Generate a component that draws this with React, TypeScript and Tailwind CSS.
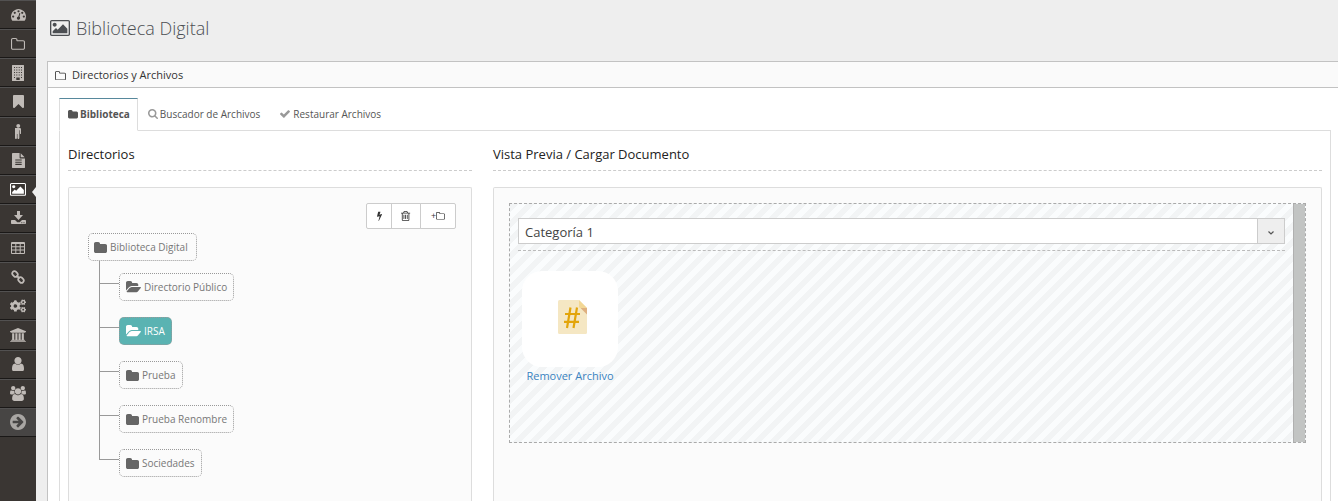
import type { ReactNode } from "react";
import { FaCogs } from "react-icons/fa";

type IconProps = { box?: string; className?: string };

const glyph = (defaultBox: string, children: ReactNode) =>
  function Glyph({ box = defaultBox, className }: IconProps) {
    return (
      <svg viewBox={box} fill="currentColor" aria-hidden="true" className={className}>
        {children}
      </svg>
    );
  };

const Dashboard = glyph(
  "0 128 1792 1536",
  <path
    fillRule="evenodd"
    d="M384 1152q0-53-37.5-90.5t-90.5-37.5-90.5 37.5-37.5 90.5 37.5 90.5 90.5 37.5 90.5-37.5 37.5-90.5zM576 704q0-53-37.5-90.5t-90.5-37.5-90.5 37.5-37.5 90.5 37.5 90.5 90.5 37.5 90.5-37.5 37.5-90.5zM1004 1185l101-382q6-26-7.5-48.5t-38.5-29.5-48 6.5-30 39.5l-101 382q-60 5-107 43.5t-63 98.5q-20 77 20 146t117 89 146-20 89-117q16-60-6-117t-72-91zM1664 1152q0-53-37.5-90.5t-90.5-37.5-90.5 37.5-37.5 90.5 37.5 90.5 90.5 37.5 90.5-37.5 37.5-90.5zM1024 512q0-53-37.5-90.5t-90.5-37.5-90.5 37.5-37.5 90.5 37.5 90.5 90.5 37.5 90.5-37.5 37.5-90.5zM1472 704q0-53-37.5-90.5t-90.5-37.5-90.5 37.5-37.5 90.5 37.5 90.5 90.5 37.5 90.5-37.5 37.5-90.5zM1792 1152q0 261-141 483-19 29-54 29h-1402q-35 0-54-29-141-221-141-483 0-182 71-348t191-286 286-191 348-71 348 71 286 191 191 286 71 348z"
  />
);
const FolderOutline = glyph(
  "64 128 1664 1408",
  <path d="M1600 1312v-704q0-40-28-68t-68-28h-704q-40 0-68-28t-28-68v-64q0-40-28-68t-68-28h-320q-40 0-68 28t-28 68v960q0 40 28 68t68 28h1216q40 0 68-28t28-68zm128-704v704q0 92-66 158t-158 66h-1216q-92 0-158-66t-66-158v-960q0-92 66-158t158-66h320q92 0 158 66t66 158v32h672q92 0 158 66t66 158z" />
);
const Folder = glyph(
  "64 128 1664 1408",
  <path d="M1728 608v704q0 92-66 158t-158 66h-1216q-92 0-158-66t-66-158v-960q0-92 66-158t158-66h320q92 0 158 66t66 158v32h672q92 0 158 66t66 158z" />
);
const FolderOpen = glyph(
  "-64 128 1880 1408",
  <path d="M1815 952q0 31-31 66l-336 396q-43 51-120.5 86.5t-143.5 35.5h-1088q-34 0-60.5-13t-26.5-43q0-31 31-66l336-396q43-51 120.5-86.5t143.5-35.5h1088q34 0 60.5 13t26.5 43zm-343-344v160h-832q-94 0-197 47.5t-164 119.5l-337 396-5 6q0-4-.5-12.5t-.5-12.5v-960q0-92 66-158t158-66h320q92 0 158 66t66 158v32h544q92 0 158 66t66 158z" />
);
const Building = glyph(
  "0 0 12 16",
  <path
    fillRule="evenodd"
    d="M.5 0h11q.5 0 .5.5v15q0 .5-.5.5h-11q-.5 0-.5-.5v-15q0-.5.5-.5zM2 2v1h1v-1zM4.300 2v1h1v-1zM6.700 2v1h1v-1zM9 2v1h1v-1zM2 4.500v1h1v-1zM4.300 4.500v1h1v-1zM6.700 4.500v1h1v-1zM9 4.500v1h1v-1zM2 7v1h1v-1zM4.300 7v1h1v-1zM6.700 7v1h1v-1zM9 7v1h1v-1zM2 9.500v1h1v-1zM4.300 9.500v1h1v-1zM6.700 9.500v1h1v-1zM9 9.500v1h1v-1zM2 12v1h1v-1zM9 12v1h1v-1zM4.300 12.500v2.500h3.400v-2.500z"
  />
);
const Bookmark = glyph(
  "256 128 1280 1536",
  <path d="M1420 128q23 0 44 9 33 13 52.5 41t19.500 62v1289q0 34-19.500 62t-52.500 41q-19 8-44 8-48 0-83-32l-441-424-441 424q-36 33-83 33-23 0-44-9-33-13-52.500-41t-19.500-62v-1289q0-34 19.500-62t52.500-41q21-9 44-9h1048z" />
);
const Male = glyph(
  "512 32 768 1760",
  <path d="M1280 704v416q0 40-28 68t-68 28-68-28-28-68v-352h-64v912q0 46-33 79t-79 33-79-33-33-79v-464h-64v464q0 46-33 79t-79 33-79-33-33-79v-912h-64v352q0 40-28 68t-68 28-68-28-28-68v-416q0-80 56-136t136-56h640q80 0 136 56t56 136zm-160-448q0 93-65.500 158.500t-158.500 65.500-158.500-65.500-65.500-158.500 65.500-158.500 158.500-65.500 158.500 65.500 65.500 158.500z" />
);
const FileText = glyph(
  "128 0 1536 1792",
  <path
    fillRule="evenodd"
    d="M1596 476q14 14 28 36h-472v-472q22 14 36 28zM1120 640h544v1056q0 40-28 68t-68 28h-1344q-40 0-68-28t-28-68v-1600q0-40 28-68t68-28h800v544q0 40 28 68t68 28zM1280 1376v-64q0-14-9-23t-23-9h-704q-14 0-23 9t-9 23v64q0 14 9 23t23 9h704q14 0 23-9t9-23zM1280 1120v-64q0-14-9-23t-23-9h-704q-14 0-23 9t-9 23v64q0 14 9 23t23 9h704q14 0 23-9t9-23zM1280 864v-64q0-14-9-23t-23-9h-704q-14 0-23 9t-9 23v64q0 14 9 23t23 9h704q14 0 23-9t9-23z"
  />
);
const Picture = glyph(
  "-64 128 1920 1536",
  <path d="M576 576q0 80-56 136t-136 56-136-56-56-136 56-136 136-56 136 56 56 136zm1024 384v448h-1408v-192l320-320 160 160 512-512zm96-704h-1600q-13 0-22.500 9.500t-9.500 22.500v1216q0 13 9.500 22.500t22.500 9.500h1600q13 0 22.500-9.500t9.500-22.500v-1216q0-13-9.500-22.500t-22.500-9.500zm160 32v1216q0 66-47 113t-113 47h-1600q-66 0-113-47t-47-113v-1216q0-66 47-113t113-47h1600q66 0 113 47t47 113z" />
);
const Download = glyph(
  "0 0 15 14",
  <path
    fillRule="evenodd"
    d="M6 0h3v4h3l-4.500 5-4.500-5h3zM.8 9h3.200l2.300 2.200h2.400l2.300-2.200h3.200q.8 0 .8.8v2.400q0 .8-.8.8h-13.400q-.8 0-.8-.8v-2.400q0-.8.8-.8zM10.300 11.200v1h1v-1zM12.500 11.200v1h1v-1z"
  />
);
const Table = glyph(
  "0 0 14 12",
  <path
    fillRule="evenodd"
    d="M1 0h12q1 0 1 1v10q0 1-1 1h-12q-1 0-1-1v-10q0-1 1-1zM1 2v2.300h3.300v-2.300zM5.300 2v2.300h3.400v-2.300zM9.700 2v2.300h3.300v-2.300zM1 5.300v2.300h3.300v-2.300zM5.300 5.300v2.300h3.400v-2.300zM9.700 5.300v2.300h3.300v-2.300zM1 8.600v2.400h3.300v-2.400zM5.300 8.600v2.400h3.400v-2.400zM9.700 8.600v2.400h3.300v-2.400z"
  />
);
const Chain = glyph(
  "0 0 14 14",
  <g fill="none" stroke="currentColor" strokeWidth="1.800">
    <rect x="-3" y="-2.200" width="6" height="4.400" rx="2" transform="translate(4 4) rotate(45)" />
    <rect x="-3" y="-2.200" width="6" height="4.400" rx="2" transform="translate(10 10) rotate(45)" />
    <path d="M5.500 5.500l3 3" />
  </g>
);
const Bank = glyph(
  "-64 128 1920 1792",
  <path d="M896 128l960 384v128h-128q0 26-20.500 45t-48.500 19h-1526q-28 0-48.500-19t-20.500-45h-128v-128zm-704 640h256v768h128v-768h256v768h128v-768h256v768h128v-768h256v768h59q28 0 48.500 19t20.500 45v64h-1664v-64q0-26 20.500-45t48.500-19h59v-768zm1595 960q28 0 48.500 19t20.500 45v128h-1920v-128q0-26 20.500-45t48.500-19h1782z" />
);
const User = glyph(
  "256 128 1280 1536",
  <path d="M1536 1399q0 109-62.500 187t-150.500 78h-854q-88 0-150.500-78t-62.500-187q0-85 8.500-160.500t31.500-152 58.500-131 94-89 134.500-34.500q131 128 313 128t313-128q76 0 134.500 34.500t94 89 58.500 131 31.500 152 8.500 160.500zm-256-887q0 159-112.500 271.500t-271.500 112.500-271.500-112.500-112.500-271.500 112.500-271.500 271.500-112.500 271.500 112.500 112.500 271.500z" />
);
const Users = glyph(
  "-64 0 1920 1792",
  <path d="M529 896q-162 5-265 128h-134q-82 0-138-40.500t-56-118.500q0-353 124-353 6 0 43.500 21t97.500 42.500 119 21.500q67 0 133-23-5 37-5 66 0 139 81 256zm1071 637q0 120-73 189.500t-194 69.500h-874q-121 0-194-69.500t-73-189.500q0-53 3.500-103.500t14-109 26.500-108.500 43-97.500 62-81 85.500-53.500 111.500-20q10 0 43 21.500t73 48 107 48 135 21.500 135-21.500 107-48 73-48 43-21.500q61 0 111.500 20t85.500 53.500 62 81 43 97.500 26.500 108.500 14 109 3.500 103.500zm-1024-1277q0 106-75 181t-181 75-181-75-75-181 75-181 181-75 181 75 75 181zm704 384q0 159-112.500 271.500t-271.500 112.500-271.500-112.500-112.500-271.500 112.500-271.500 271.500-112.500 271.500 112.500 112.500 271.500zm576 225q0 78-56 118.500t-138 40.500h-134q-103-123-265-128 81-117 81-256 0-29-5-66 66 23 133 23 59 0 119-21.500t97.500-42.500 43.500-21q124 0 124 353zm-128-609q0 106-75 181t-181 75-181-75-75-181 75-181 181-75 181 75 75 181z" />
);
const ArrowCircle = glyph(
  "128 128 1536 1536",
  <path d="M1413 896q0-27-18-45l-91-91-362-362q-18-18-45-18t-45 18l-91 91q-18 18-18 45t18 45l189 189h-502q-26 0-45 19t-19 45v128q0 26 19 45t45 19h502l-189 189q-19 19-19 45t19 45l91 91q18 18 45 18t45-18l362-362 91-91q18-18 18-45zm251 0q0 209-103 385.500t-279.500 279.500-385.500 103-385.500-103-279.500-279.500-103-385.500 103-385.500 279.500-279.500 385.500-103 385.500 103 279.500 279.500 103 385.500z" />
);
const Search = glyph(
  "64 128 1664 1664",
  <path d="M1216 832q0-185-131.500-316.500t-316.500-131.500-316.500 131.500-131.500 316.500 131.500 316.500 316.500 131.500 316.500-131.500 131.500-316.500zm512 832q0 52-38 90t-90 38q-54 0-90-38l-343-342q-179 124-399 124-143 0-273.500-55.500t-225-150-150-225-55.500-273.500 55.500-273.500 150-225 225-150 273.500-55.500 273.500 55.500 225 150 150 225 55.500 273.500q0 220-124 399l343 343q37 37 37 90z" />
);
const Check = glyph(
  "121 309 1550 1213",
  <path d="M1671 566q0 40-28 68l-724 724-136 136q-28 28-68 28t-68-28l-136-136-362-362q-28-28-28-68t28-68l136-136q28-28 68-28t68 28l294 295 656-657q28-28 68-28t68 28l136 136q28 28 28 68z" />
);
const Bolt = glyph(
  "448 0 896 1792",
  <path d="M1333 566q18 20 7 44l-540 1157q-13 25-42 25-4 0-14-2-17-5-25.500-19t-4.500-30l197-808-406 101q-4 1-12 1-18 0-31-11-18-15-13-39l201-825q4-14 16-23t28-9h328q19 0 32 12.500t13 29.500q0 8-5 18l-171 463 396-98q8-2 12-2 19 0 34 15z" />
);
const Trash = glyph(
  "192 128 1408 1536",
  <path d="M704 736v576q0 14-9 23t-23 9h-64q-14 0-23-9t-9-23v-576q0-14 9-23t23-9h64q14 0 23 9t9 23zm256 0v576q0 14-9 23t-23 9h-64q-14 0-23-9t-9-23v-576q0-14 9-23t23-9h64q14 0 23 9t9 23zm256 0v576q0 14-9 23t-23 9h-64q-14 0-23-9t-9-23v-576q0-14 9-23t23-9h64q14 0 23 9t9 23zm128 724v-948h-896v948q0 22 7 40.500t14.500 27 10.500 8.500h832q3 0 10.500-8.500t14.500-27 7-40.500zm-672-1076h448l-48-117q-7-9-17-11h-317q-10 2-17 11zm928 32v64q0 14-9 23t-23 9h-96v948q0 83-47 143.500t-113 60.500h-832q-66 0-113-58.500t-47-141.500v-952h-96q-14 0-23-9t-9-23v-64q0-14 9-23t23-9h309l70-167q15-37 54-63t79-26h320q40 0 79 26t54 63l70 167h309q14 0 23 9t9 23z" />
);

const navItems: { label: string; icon: ReactNode; state?: "current" | "toggle" }[] = [
  { label: "Tablero", icon: <Dashboard className="w-[15px]" /> },
  { label: "Carpetas", icon: <FolderOutline className="w-[14px]" /> },
  { label: "Empresas", icon: <Building className="w-[12px]" /> },
  { label: "Marcadores", icon: <Bookmark className="w-[11px]" /> },
  { label: "Personas", icon: <Male className="h-[15px]" /> },
  { label: "Documentos", icon: <FileText className="w-[13px]" /> },
  { label: "Biblioteca Digital", icon: <Picture className="w-4" />, state: "current" },
  { label: "Descargas", icon: <Download className="w-[15px]" /> },
  { label: "Tablas", icon: <Table className="w-[14px]" /> },
  { label: "Enlaces", icon: <Chain className="w-[14px]" /> },
  { label: "Procesos", icon: <FaCogs className="size-4" /> },
  { label: "Instituciones", icon: <Bank className="w-4" /> },
  { label: "Usuario", icon: <User className="w-[12px]" /> },
  { label: "Grupos", icon: <Users className="w-4" /> },
  { label: "Expandir", icon: <ArrowCircle className="w-4" />, state: "toggle" },
];

function Sidebar() {
  return (
    <nav aria-label="Principal" className="w-9 shrink-0 bg-[#3a3633]">
      <ul className="grid h-[437px] auto-rows-fr">
        {navItems.map(({ label, icon, state }) => (
          <li key={label} className="relative">
            <a
              href="#"
              aria-label={label}
              className={
                "flex h-full items-center justify-center border-t border-b border-t-[#525151] border-b-[#1a1817] " +
                (state === "current"
                  ? "text-white"
                  : state === "toggle"
                    ? "bg-[#474544] text-[#a9a6a3]"
                    : "text-[#c0bbb7]")
              }
            >
              {icon}
            </a>
            {state === "current" && (
              <svg viewBox="0 0 4 10" aria-hidden="true" className="absolute top-3 right-0 h-[10px] w-1 fill-[#eeeeee]">
                <path d="M4 0L0 5l4 5z" />
              </svg>
            )}
          </li>
        ))}
      </ul>
    </nav>
  );
}

const folders = [
  { name: "Directorio Público", open: true },
  { name: "IRSA", open: true, selected: true },
  { name: "Prueba" },
  { name: "Prueba Renombre" },
  { name: "Sociedades" },
];

type TreeNodeProps = { name: string; open?: boolean; selected?: boolean; root?: boolean };

function TreeNode({ name, open, selected, root }: TreeNodeProps) {
  return (
    <button
      type="button"
      className={
        "flex h-7 items-center gap-[3px] rounded-[5px] border border-dotted border-[#999] text-[10px] " +
        (root ? "pr-2 pl-[5px] " : "px-[6px] ") +
        (selected ? "bg-[#5ab3b2] text-white" : "text-[#777]")
      }
    >
      <span className={selected ? "text-white" : "text-[#666]"}>
        {open ? <FolderOpen className="w-[15px]" /> : <Folder className="w-[13px]" />}
      </span>
      {name}
    </button>
  );
}

function Tree() {
  return (
    <div className="mt-1 flex flex-col items-start pl-1">
      <TreeNode name="Biblioteca Digital" root />
      <ul className="ml-[11px]">
        {folders.map((c, i) => (
          <li key={c.name} className="flex">
            <div className="flex w-5 flex-col">
              <div className={"border-b border-l border-[#999] " + (i === 0 ? "h-[23px]" : "h-[27px]")} />
              {i < folders.length - 1 && <div className="flex-1 border-l border-[#999]" />}
            </div>
            <div className={i === 0 ? "pt-3" : "pt-4"}>
              <TreeNode {...c} />
            </div>
          </li>
        ))}
      </ul>
    </div>
  );
}

function HashFile() {
  return (
    <svg viewBox="0 0 29 34" aria-hidden="true" className="h-[34px] w-[29px]">
      <path d="M1.500 0H21l8 8v24.500q0 1.500-1.500 1.500h-26Q0 34 0 32.500v-31Q0 0 1.500 0z" fill="#f5e7c3" />
      <path d="M21 0l8 8h-6.500Q21 8 21 6.500z" fill="#f2d795" />
      <path d="M22.500 8H29v6.500z" fill="#dfb07f" />
      <path d="M12.500 7.500l-3.500 20.500M19 7.500l-3.500 20.500M7 14H22M6 21.800h15" fill="none" stroke="#e3a50a" strokeWidth="2.200" />
    </svg>
  );
}

function Heading({ text }: { text: string }) {
  return (
    <h2 className="border-b border-dashed border-[#ccc] pb-[7px] text-[13px] leading-[18px] text-[#222]">{text}</h2>
  );
}

const toolButton = "flex h-[26px] items-center justify-center border border-[#ccc] bg-white text-[#333]";

export default function App() {
  return (
    <div className="flex min-h-screen overflow-hidden bg-[#eeeeee] font-['Open_Sans',sans-serif] text-[#333]">
      <Sidebar />
      <div className="flex min-w-0 flex-1 flex-col pl-[11px]">
        <h1 className="flex h-[61px] items-center gap-[6px] pb-[5px] pl-[3px] text-[18px] font-light text-[#4c4f53]">
          <Picture className="w-5" />
          Biblioteca Digital
        </h1>
        <section className="-mr-px flex flex-1 flex-col border border-b-0 border-[#c2c2c2] bg-white">
          <header className="flex h-[26px] items-center gap-[6px] border-b border-[#c2c2c2] bg-[#fafafa] pt-[2px] pl-[7px] text-[11px]">
            <FolderOutline className="w-[11px]" />
            <span>Directorios y Archivos</span>
          </header>
          <div className="flex flex-1 flex-col pt-[10px] pr-[7px] pl-[11px]">
            <div role="tablist" className="flex h-8 gap-px text-[10px] text-[#555]">
              <button
                type="button"
                role="tab"
                aria-selected="true"
                className="z-10 -mb-px flex items-center gap-[2px] border border-t-[#57889c] border-r-[#ddd] border-b-white border-l-[#ddd] bg-white pr-[7px] pl-2 font-bold"
              >
                <Folder className="w-[10px]" />
                Biblioteca
              </button>
              <button type="button" role="tab" aria-selected="false" className="flex items-center gap-[2px] px-[9px]">
                <Search className="w-[10px] text-[#999]" />
                Buscador de Archivos
              </button>
              <button type="button" role="tab" aria-selected="false" className="flex items-center gap-[3px] px-[10px]">
                <Check className="w-[10px] text-[#999]" />
                Restaurar Archivos
              </button>
            </div>
            <div
              role="tabpanel"
              className="grid flex-1 grid-cols-[404fr_829fr] gap-[21px] border border-b-0 border-[#ddd] px-2 pt-[14px]"
            >
              <div className="flex min-w-0 flex-col gap-4">
                <Heading text="Directorios" />
                <div className="flex-1 rounded-t-[2px] border border-b-0 border-[#ddd] bg-[#fbfbfb] p-[15px]">
                  <div className="flex justify-end">
                    <button type="button" aria-label="Renombrar" className={toolButton + " w-[26px] rounded-l-[2px]"}>
                      <Bolt className="h-[10px]" />
                    </button>
                    <button type="button" aria-label="Eliminar" className={toolButton + " -ml-px w-[30px]"}>
                      <Trash className="h-[10px]" />
                    </button>
                    <button
                      type="button"
                      aria-label="Nueva carpeta"
                      className={toolButton + " -ml-px w-[36px] rounded-r-[2px] text-[9px]"}
                    >
                      +<FolderOutline className="w-[9px]" />
                    </button>
                  </div>
                  <Tree />
                </div>
              </div>
              <div className="flex min-w-0 flex-col gap-4">
                <Heading text="Vista Previa / Cargar Documento" />
                <div className="flex-1 rounded-t-[2px] border border-b-0 border-[#ddd] bg-[#fbfbfb] p-[15px]">
                  <div className="flex h-60 border border-dashed border-[#aaa] bg-[#fafcfd] bg-[linear-gradient(135deg,rgba(0,0,0,0.03)_25%,transparent_25%,transparent_50%,rgba(0,0,0,0.03)_50%,rgba(0,0,0,0.03)_75%,transparent_75%,transparent)] bg-size-[16px_16px]">
                    <div className="min-w-0 flex-1 px-2 pt-[14px]">
                      <div className="relative border-b border-dashed border-[#bbb] pb-[6px]">
                        <select
                          aria-label="Categoría"
                          className="block h-[26px] w-full appearance-none border border-[#ccc] bg-white px-[6px] pt-[3px] text-[13px] text-[#444]"
                        >
                          <option>Categoría 1</option>
                        </select>
                        <span className="pointer-events-none absolute top-0 right-0 flex h-[26px] w-7 items-center justify-center border border-[#ccc] bg-[#eee]">
                          <svg viewBox="0 0 6 4" aria-hidden="true" className="mt-[3px] w-[6px]">
                            <path d="M.5 .5L3 3 5.500 .5" fill="none" stroke="#555" strokeWidth="1.200" />
                          </svg>
                        </span>
                      </div>
                      <figure className="mt-5 ml-1 flex w-24 flex-col items-center">
                        <div className="flex size-24 items-center justify-center rounded-[20px] bg-white pb-1 pl-1">
                          <HashFile />
                        </div>
                        <a href="#" className="text-[11px] leading-[18px] whitespace-nowrap text-[#3b83c0]">
                          Remover Archivo
                        </a>
                      </figure>
                    </div>
                    <div className="w-3 border-l border-[#b0b0b0] bg-[#c2c4c3]" />
                  </div>
                </div>
              </div>
            </div>
          </div>
        </section>
      </div>
    </div>
  );
}
